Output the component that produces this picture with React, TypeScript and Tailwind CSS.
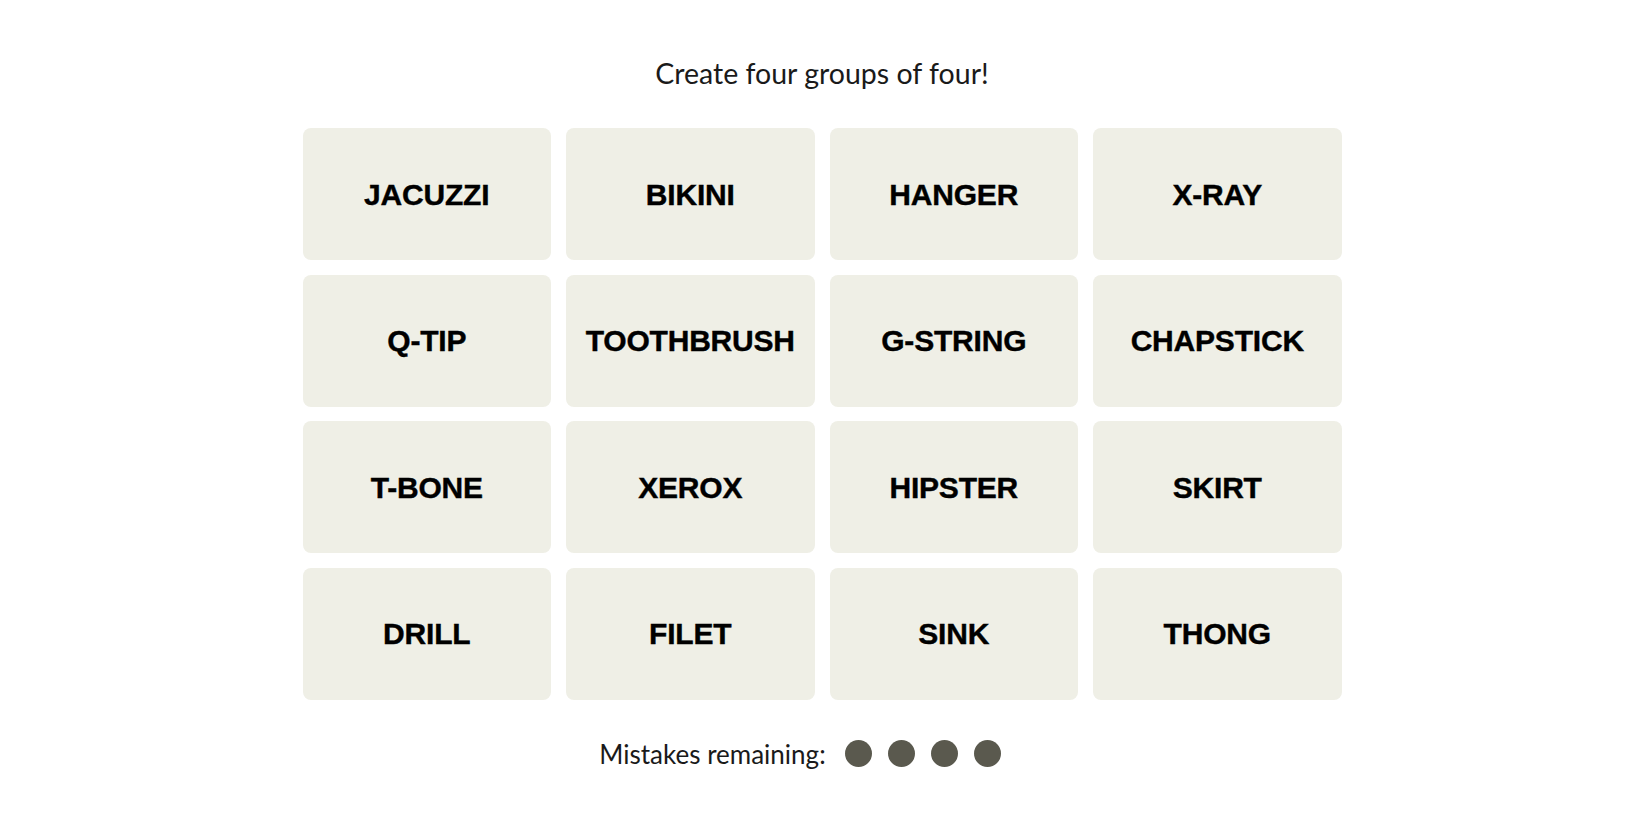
import React from "react";

const words = [
  "JACUZZI", "BIKINI", "HANGER", "X-RAY",
  "Q-TIP", "TOOTHBRUSH", "G-STRING", "CHAPSTICK",
  "T-BONE", "XEROX", "HIPSTER", "SKIRT",
  "DRILL", "FILET", "SINK", "THONG",
];

export default function App() {
  return (
    <div className="w-[1650px] h-[825px] bg-white flex flex-col items-center pt-[55px] pr-[6px] text-[#121212]">
      <p className="text-[28.5px] leading-[36px] font-normal font-['Lato','Liberation_Sans',sans-serif] text-[#1a1a1a]">
        Create four groups of four!
      </p>
      <div className="mt-[37px] grid grid-cols-4 gap-x-[15px] gap-y-[14.5px] w-[1039px]">
        {words.map((w) => (
          <div
            key={w}
            className="h-[132px] rounded-[8px] bg-[#efefe6] flex items-center justify-center text-[30px] font-bold font-['Liberation_Sans',Arial,sans-serif] tracking-[-0.2px] text-black [-webkit-text-stroke:0.4px_black]"
          >
            {w}
          </div>
        ))}
      </div>
      <div className="mt-[36px] mr-[44px] flex items-center h-[36px]">
        <span className="text-[26px] leading-[36px] font-normal font-['Lato','Liberation_Sans',sans-serif] text-[#1a1a1a]">
          Mistakes remaining:
        </span>
        <div className="flex items-center gap-[16px] ml-[19px]">
          <span className="w-[27px] h-[27px] rounded-full bg-[#5a594e]" />
          <span className="w-[27px] h-[27px] rounded-full bg-[#5a594e]" />
          <span className="w-[27px] h-[27px] rounded-full bg-[#5a594e]" />
          <span className="w-[27px] h-[27px] rounded-full bg-[#5a594e]" />
        </div>
      </div>
    </div>
  );
}
